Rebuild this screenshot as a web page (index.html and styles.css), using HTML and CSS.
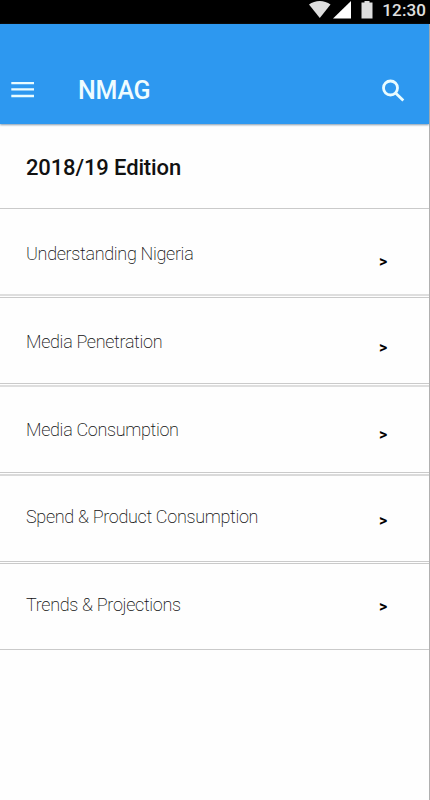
FILE: index.html
```html
<!DOCTYPE html>
<html lang="en">

<head>
  <meta charset="UTF-8" />
  <meta name="viewport" content="width=device-width, initial-scale=1.0" />
  <title>NMAG</title>
  <link rel="stylesheet" href="styles.css">
</head>

<body>
  <div class="status-bar">
    <svg class="status-icons" width="66" height="24" viewBox="0 0 66 24">
      <path class="wifi" d="M0 4.5C6 -.3 15.500 -.3 21.500 4.500L10.800 18z" />
      <path class="signal" d="M42 1v17.500H24z" />
      <path class="battery" d="M52.500 2.500h3V1h5v1.500h3v16H52.500z" />
    </svg>
    <span class="clock">12:30</span>
  </div>

  <div class="screen">
    <header>
      <svg class="menu-icon" width="24" height="16" viewBox="0 0 24 16">
        <path d="M.300 1h22.700M.300 7.300h22.700M.300 14h22.700" />
      </svg>
      <h1>NMAG</h1>
      <svg class="search-icon" width="24" height="24" viewBox="0 0 24 24">
        <circle cx="9.500" cy="10" r="7" />
        <path d="M14.300 14.800L22.300 22.500" />
      </svg>
    </header>

    <main>
      <h2>2018/19 Edition</h2>
      <ul class="sections">
        <li><span>Understanding Nigeria</span><span class="arrow">&gt;</span></li>
        <li><span>Media Penetration</span><span class="arrow">&gt;</span></li>
        <li><span>Media Consumption</span><span class="arrow">&gt;</span></li>
        <li><span>Spend &amp; Product Consumption</span><span class="arrow">&gt;</span></li>
        <li><span>Trends &amp; Projections</span><span class="arrow">&gt;</span></li>
      </ul>
    </main>
  </div>
</body>

</html>
```

FILE: styles.css
```css
* {
  box-sizing: border-box;
}

body {
  margin: 0;
  height: 800px;
  overflow: hidden;
  display: flex;
  flex-direction: column;
  background-color: #fefefe;
  color: #111;
  font-family: Roboto, sans-serif;
}

.status-bar {
  height: 24px;
  padding-right: 4px;
  display: flex;
  justify-content: flex-end;
  background-color: #000;
  color: #e0e0e0;
}

.status-icons {
  margin-right: 7px;
}

.wifi,
.battery {
  fill: #dedede;
}

.signal {
  fill: #fff;
}

.clock {
  font-size: 17px;
  font-weight: 500;
  line-height: 20px;
  letter-spacing: 0.1px;
}

.screen {
  flex: 1;
  border-right: 1px solid #b0b0b0;
}

header {
  height: 100px;
  padding: 32px 24px 0 11px;
  display: flex;
  align-items: center;
  background-color: #2d98f0;
  color: #effcff;
  box-shadow: 0 1px 2px #8298ac;
}

h1 {
  flex: 1;
  margin: 0 0 0 43px;
  font-size: 25px;
  font-weight: 500;
  letter-spacing: -0.2px;
}

.menu-icon,
.search-icon {
  fill: none;
  stroke: #e9fcff;
  stroke-width: 2.3;
}

.search-icon {
  stroke-width: 2.8;
}

h2 {
  height: 85px;
  margin: 0;
  padding: 2px 26px 0;
  border-bottom: 1px solid #cacaca;
  font-size: 22px;
  font-weight: 500;
  line-height: 84px;
  letter-spacing: -0.13px;
}

.sections {
  margin: 0;
  padding: 0;
  list-style: none;
}

li {
  height: 87px;
  margin-bottom: 1px;
  padding: 32px 42px 0 26px;
  display: flex;
  justify-content: space-between;
  align-items: flex-start;
  border-top: 1px solid #cacaca;
  border-bottom: 1px solid #cacaca;
  font-size: 18px;
  font-weight: 200;
  line-height: 24px;
  letter-spacing: -0.32px;
}

li:first-child {
  border-top: none;
  border-bottom: 2px solid #dedede;
  padding-top: 33px;
}

li:nth-child(3) {
  height: 88px;
  border-top: 2px solid #dedede;
  padding-top: 31px;
}

li:nth-child(4) {
  height: 88px;
  border-top: 2px solid #dadada;
  padding-top: 29px;
}

li:nth-child(5) {
  padding-top: 29px;
}

.arrow {
  margin-top: 8px;
  color: #000;
  font-size: 16px;
  font-weight: 700;
}

/* the arrows sit slightly closer together than the rows */
li:nth-child(2) .arrow {
  margin-top: 6px;
}

li:nth-child(3) .arrow {
  margin-top: 5px;
}

li:nth-child(4) .arrow {
  margin-top: 4px;
}

li:nth-child(5) .arrow {
  margin-top: 2px;
}
```
